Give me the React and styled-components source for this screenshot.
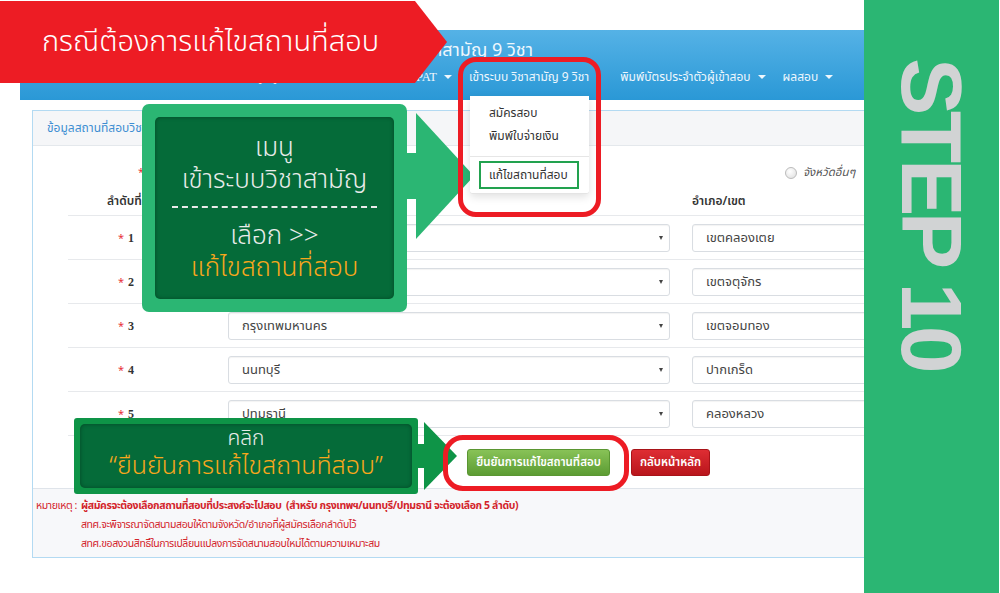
import styled, { createGlobalStyle } from "styled-components";

const GlobalStyle = createGlobalStyle`
  html, body { margin: 0; padding: 0; background: #fff; }
  body { font-family: "Noto Sans Thai", "Noto Sans", "DejaVu Sans", sans-serif; }
  * { box-sizing: border-box; }
`;

const THAI = `"Noto Sans Thai", "Noto Sans", "DejaVu Sans", sans-serif`;

const Canvas = styled.div`
  position: relative;
  width: 1000px;
  height: 593px;
  overflow: hidden;
  background: #fff;
  font-family: ${THAI};
`;

const Page = styled.div`
  margin: 30px 0 0 20px;
  width: 920px;
`;

/* ---------- navbar ---------- */
const NavBar = styled.div`
  height: 70px;
  background: linear-gradient(#55b2e6, #2a98d6);
  color: #eef7fd;
  display: flex;
  flex-direction: column;
`;

const Brand = styled.div`
  width: 513px;
  padding-top: 8px;
  height: 34px;
  line-height: 26px;
  font-size: 18px;
  text-align: right;
  white-space: nowrap;
`;

const NavMenu = styled.div`
  display: flex;
  height: 26px;
  line-height: 26px;
  font-size: 12px;
  white-space: nowrap;
`;

const NavLead = styled.div`
  width: 432px;
  display: flex;
  justify-content: flex-end;
  gap: 22px;
`;

const NavItem = styled.div`
  position: relative;
  margin-left: ${(p) => p.$gap || 0}px;
  display: flex;
  align-items: center;
  gap: 7px;
`;

const Latin = styled.span`
  font-family: "Liberation Serif", serif;
  font-size: 12.5px;
`;

const Caret = styled.span`
  width: 0;
  height: 0;
  border-left: 4px solid transparent;
  border-right: 4px solid transparent;
  border-top: 4px solid #eef7fd;
`;

const Dropdown = styled.div`
  position: absolute;
  left: 1px;
  top: calc(100% + 6px);
  width: 119px;
  padding: 6px 0 4px;
  background: #fff;
  border-bottom: 1px solid #e4e4e4;
  border-radius: 0 0 3px 3px;
  box-shadow: 0 3px 8px rgba(0, 0, 0, 0.12);
  color: #333;
  font-size: 12px;
  z-index: 2;
`;

const MenuItem = styled.div`
  height: ${(p) => (p.$boxed ? 28 : 23)}px;
  line-height: ${(p) => (p.$boxed ? 24 : 23)}px;
  padding-left: ${(p) => (p.$boxed ? 8 : 19)}px;
  margin: ${(p) => (p.$boxed ? "0 10px 0 9px" : "0")};
  border: ${(p) => (p.$boxed ? "2px solid #22a24f" : "none")};
`;

const MenuDivider = styled.div`
  height: 1px;
  background: #e6e6e6;
  margin: 8px 0 4px;
`;

/* ---------- panel ---------- */
const Panel = styled.div`
  margin: 10px 0 0 12px;
  border: 1px solid #b3daf2;
  border-right: none;
  background: #fff;
`;

const PanelHeading = styled.div`
  height: 35px;
  line-height: 35px;
  padding-left: 14px;
  background: #f5f6f8;
  border-bottom: 1px solid #e4e8ec;
  color: #3d8ed2;
  font-size: 12px;
`;

const PanelBody = styled.div`
  padding: 12px 0 0 35px;
`;

const TableGrid = styled.div`
  display: grid;
  grid-template-columns: 138px 442px 1fr;
  column-gap: 22px;
  align-items: center;
  height: ${(p) => p.$h}px;
  border-bottom: ${(p) => (p.$line ? "1px solid #e7e9ec" : "none")};
  font-size: 12px;
  color: #333;
`;

const Cell = styled.div`
  padding-left: ${(p) => p.$pad || 0}px;
  white-space: nowrap;
  font-weight: ${(p) => (p.$bold ? 600 : 400)};
`;

const Star = styled.span`
  color: #e8333a;
  font-size: 11px;
  margin-right: 4px;
`;

const Num = styled.span`
  font-family: "Liberation Serif", serif;
  font-weight: bold;
  font-size: 12px;
  color: #333;
`;

const Radio = styled.span`
  display: inline-block;
  width: 12px;
  height: 12px;
  border-radius: 50%;
  border: 1px solid #bbb;
  background: radial-gradient(circle at 40% 35%, #fff, #ddd);
  vertical-align: middle;
  margin-right: 6px;
`;

const RadioText = styled.span`
  font-style: italic;
  font-size: 11.5px;
  color: #555;
  vertical-align: middle;
`;

const Field = styled.div`
  height: 28px;
  border: 1px solid #d9dde2;
  border-radius: 3px;
  box-shadow: inset 0 1px 1px rgba(0, 0, 0, 0.05);
  display: flex;
  align-items: center;
  justify-content: space-between;
  padding: 0 6px 0 13px;
  font-size: 13px;
  color: #444;
  background: #fff;
`;

const SelectCaret = styled.span`
  width: 0;
  height: 0;
  border-left: 2.5px solid transparent;
  border-right: 2.5px solid transparent;
  border-top: 4px solid #444;
`;

const ButtonRow = styled.div`
  height: 52px;
  display: flex;
  align-items: center;
  gap: 21px;
  padding-left: 399px;
`;

const Button = styled.div`
  height: 27px;
  line-height: 25px;
  width: ${(p) => p.$w}px;
  text-align: center;
  border-radius: 3px;
  color: #fff;
  font-size: 11.5px;
  font-weight: 600;
  white-space: nowrap;
  background: ${(p) =>
    p.$tone === "green"
      ? "linear-gradient(#88c257, #5c9c33)"
      : "linear-gradient(#de2d33, #b9161c)"};
  border: 1px solid ${(p) => (p.$tone === "green" ? "#5a9632" : "#a81318")};
`;

const Notes = styled.div`
  border-top: 1px solid #dfe4ea;
  background: #f7f8fa;
  padding: 8px 0 3px 3px;
  display: grid;
  grid-template-columns: 45px 1fr;
  color: #d3242b;
  font-size: 10.5px;
  letter-spacing: -0.4px;
  line-height: 19px;
  white-space: nowrap;
`;

const NoteLine = styled.div`
  font-weight: ${(p) => (p.$bold ? 700 : 400)};
`;

/* ---------- overlays ---------- */
const StepBar = styled.div`
  position: absolute;
  top: 0;
  right: 1px;
  width: 135px;
  height: 593px;
  background: #2bb673;
  display: flex;
  justify-content: center;
  padding-top: 58px;
`;

const StepText = styled.div`
  writing-mode: vertical-rl;
  font-family: "Liberation Sans", Arial, sans-serif;
  font-weight: bold;
  font-size: 86px;
  letter-spacing: -4.5px;
  color: #d1d3d4;
  line-height: 1;
`;

const Banner = styled.div`
  position: absolute;
  left: 0;
  top: 1px;
  width: 447px;
  height: 82px;
  background: #ed1c24;
  clip-path: polygon(0 0, 415px 0, 447px 41px, 415px 82px, 0 82px);
  color: #fff;
  font-size: 29px;
  line-height: 82px;
  padding-left: 42px;
  white-space: nowrap;
  font-weight: 300;
`;

const Callout = styled.div`
  position: absolute;
  left: ${(p) => p.$x}px;
  top: ${(p) => p.$y}px;
  width: ${(p) => p.$w}px;
  height: ${(p) => p.$h}px;
  padding: ${(p) => p.$pad}px;
  background: ${(p) => p.$outer};
  border-radius: ${(p) => p.$r}px;
`;

const CalloutInner = styled.div`
  height: 100%;
  background: #056b39;
  border-radius: 5px;
  box-shadow: inset 0 0 4px rgba(0, 0, 0, 0.35);
  display: flex;
  flex-direction: column;
  align-items: center;
  padding-top: ${(p) => p.$top}px;
  color: #e9ebea;
  font-weight: 300;
  white-space: nowrap;
`;

const CalloutLine = styled.div`
  font-size: ${(p) => p.$size}px;
  line-height: ${(p) => p.$lh}px;
  color: ${(p) => (p.$accent ? "#f8a71c" : "#e9ebea")};
  margin-top: ${(p) => p.$mt || 0}px;
`;

const DashRule = styled.div`
  width: 205px;
  margin-top: 10px;
  border-top: 2px dashed #e9ebea;
`;

const ArrowSvg = styled.svg`
  position: absolute;
  left: ${(p) => p.$x}px;
  top: ${(p) => p.$y}px;
`;

const Ring = styled.div`
  position: absolute;
  left: ${(p) => p.$x}px;
  top: ${(p) => p.$y}px;
  width: ${(p) => p.$w}px;
  height: ${(p) => p.$h}px;
  border: 5px solid #ed1c24;
  border-radius: ${(p) => p.$r}px;
`;

const rows = [
  { n: 1, prov: "", dist: "เขตคลองเตย" },
  { n: 2, prov: "", dist: "เขตจตุจักร" },
  { n: 3, prov: "กรุงเทพมหานคร", dist: "เขตจอมทอง" },
  { n: 4, prov: "นนทบุรี", dist: "ปากเกร็ด" },
  { n: 5, prov: "ปทุมธานี", dist: "คลองหลวง" },
];

export default function App() {
  return (
    <Canvas>
      <GlobalStyle />
      <Page>
        <NavBar>
          <Brand>ระบบรับสมัครสอบ GAT/PAT และวิชาสามัญ 9 วิชา</Brand>
          <NavMenu>
            <NavLead>
              <NavItem>หน้าแรก</NavItem>
              <NavItem>ข้อมูลผู้สมัคร <Caret /></NavItem>
              <NavItem>
                เข้าระบบ <Latin>GAT/PAT</Latin> <Caret />
              </NavItem>
            </NavLead>
            <NavItem $gap={17}>
              เข้าระบบ วิชาสามัญ 9 วิชา
              <Dropdown>
                <MenuItem>สมัครสอบ</MenuItem>
                <MenuItem>พิมพ์ใบจ่ายเงิน</MenuItem>
                <MenuDivider />
                <MenuItem $boxed>แก้ไขสถานที่สอบ</MenuItem>
              </Dropdown>
            </NavItem>
            <NavItem $gap={31}>
              พิมพ์บัตรประจำตัวผู้เข้าสอบ <Caret />
            </NavItem>
            <NavItem $gap={17}>
              ผลสอบ <Caret />
            </NavItem>
          </NavMenu>
        </NavBar>

        <Panel>
          <PanelHeading>ข้อมูลสถานที่สอบวิชาสามัญ 9 วิชา</PanelHeading>
          <PanelBody>
            <TableGrid $h={28}>
              <Cell $pad={70}>
                <Star>*</Star>เลือกกลุ่มสนามสอบ
              </Cell>
              <Cell />
              <Cell $pad={93}>
                <Radio />
                <RadioText>จังหวัดอื่นๆ</RadioText>
              </Cell>
            </TableGrid>
            <TableGrid $h={30} $line>
              <Cell $pad={39} $bold>ลำดับที่</Cell>
              <Cell $bold>จังหวัด</Cell>
              <Cell $bold>อำเภอ/เขต</Cell>
            </TableGrid>
            {rows.map((r) => (
              <TableGrid key={r.n} $h={44} $line>
                <Cell $pad={50}>
                  <Star>*</Star>
                  <Num>{r.n}</Num>
                </Cell>
                <Field>
                  <span>{r.prov}</span>
                  <SelectCaret />
                </Field>
                <Field>{r.dist}</Field>
              </TableGrid>
            ))}
            <ButtonRow>
              <Button $tone="green" $w={143}>ยืนยันการแก้ไขสถานที่สอบ</Button>
              <Button $tone="red" $w={79}>กลับหน้าหลัก</Button>
            </ButtonRow>
          </PanelBody>
          <Notes>
            <div>หมายเหตุ :</div>
            <div>
              <NoteLine $bold>
                ผู้สมัครจะต้องเลือกสถานที่สอบที่ประสงค์จะไปสอบ&nbsp;&nbsp;(สำหรับ กรุงเทพฯ/นนทบุรี/ปทุมธานี จะต้องเลือก 5 ลำดับ)
              </NoteLine>
              <NoteLine>สทศ.จะพิจารณาจัดสนามสอบให้ตามจังหวัด/อำเภอที่ผู้สมัครเลือกลำดับไว้</NoteLine>
              <NoteLine>สทศ.ขอสงวนสิทธิ์ในการเปลี่ยนแปลงการจัดสนามสอบใหม่ได้ตามความเหมาะสม</NoteLine>
            </div>
          </Notes>
        </Panel>
      </Page>

      <StepBar>
        <StepText>STEP 10</StepText>
      </StepBar>

      <Banner>กรณีต้องการแก้ไขสถานที่สอบ</Banner>

      <Callout $x={142} $y={104} $w={265} $h={208} $pad={13} $outer="#2bb673" $r={7}>
        <CalloutInner $top={15}>
          <CalloutLine $size={26} $lh={32}>เมนู</CalloutLine>
          <CalloutLine $size={26} $lh={32}>เข้าระบบวิชาสามัญ</CalloutLine>
          <DashRule />
          <CalloutLine $size={26} $lh={32} $mt={12}>เลือก &gt;&gt;</CalloutLine>
          <CalloutLine $size={26} $lh={32} $accent>แก้ไขสถานที่สอบ</CalloutLine>
        </CalloutInner>
      </Callout>
      <ArrowSvg $x={406} $y={113} width="70" height="126" viewBox="0 0 70 126">
        <rect x="0" y="40" width="12" height="46" fill="#2bb673" />
        <polygon points="10,0 68,63 10,126" fill="#2bb673" />
      </ArrowSvg>

      <Callout $x={74} $y={418} $w={344} $h={76} $pad={6} $outer="#0e9447" $r={3}>
        <CalloutInner $top={2}>
          <CalloutLine $size={21} $lh={25}>คลิก</CalloutLine>
          <CalloutLine $size={25} $lh={30} $accent>“ยืนยันการแก้ไขสถานที่สอบ”</CalloutLine>
        </CalloutInner>
      </Callout>
      <ArrowSvg $x={417} $y={422} width="42" height="68" viewBox="0 0 42 68">
        <rect x="0" y="22" width="9" height="24" fill="#0e9447" />
        <polygon points="7,0 40,34 7,68" fill="#0e9447" />
      </ArrowSvg>

      <Ring $x={458} $y={57} $w={143} $h={160} $r={18} />
      <Ring $x={443} $y={435} $w={186} $h={56} $r={20} />
    </Canvas>
  );
}
